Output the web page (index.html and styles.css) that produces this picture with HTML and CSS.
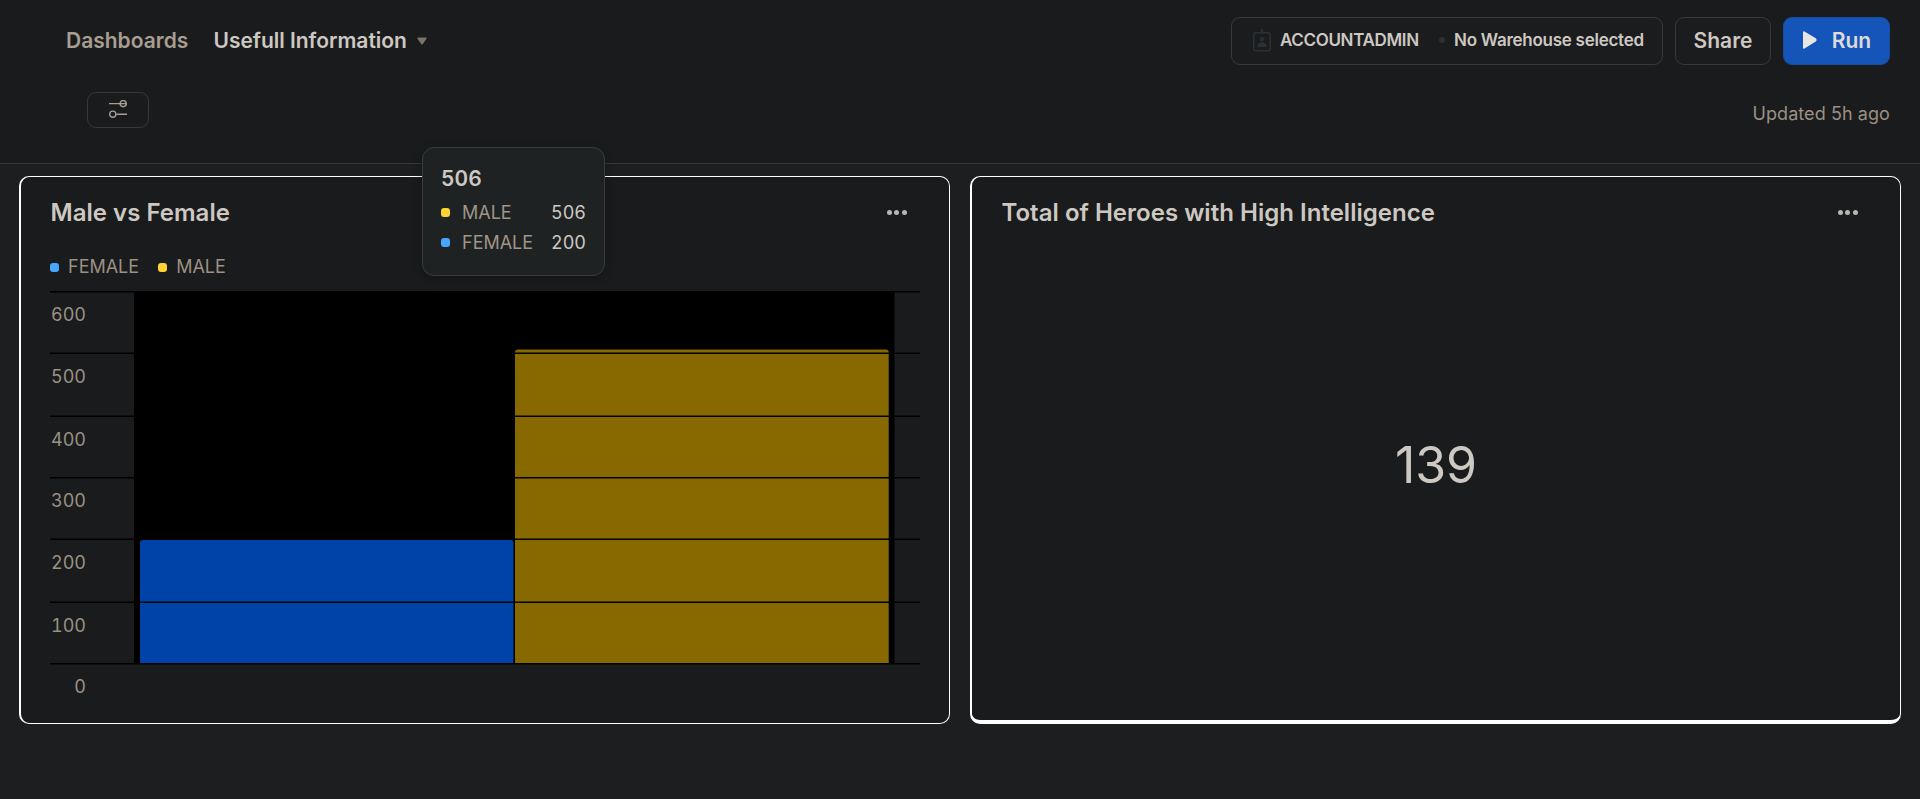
FILE: index.html
```html
<!DOCTYPE html>
<html lang="en">
<head>
<meta charset="utf-8">
<title>Usefull Information</title>
<link rel="stylesheet" href="styles.css">
</head>
<body>
<header class="header">
  <div class="bar">
    <nav class="crumbs">
      <a class="crumb-parent">Dashboards</a>
      <span class="crumb-current">Usefull Information</span>
      <svg class="caret" width="10" height="8" viewBox="0 0 10 8"><path d="M1 .5h8q1 .3.5 1.2L5.8 7q-.8 1-1.6 0L.5 1.700Q0 .8 1 .5z" fill="#7b746b"/></svg>
    </nav>
    <div class="actions">
      <div class="context">
        <svg class="badge" width="18" height="23" viewBox="0 0 18 23"><rect x=".75" y="3.750" width="16.500" height="18" rx="2.500" fill="none" stroke="#2d3033" stroke-width="1.500"/><path d="M8 0h2v4H8zM4.500 18v-1a4.500 3.800 0 0 1 9 0v1z" fill="#2d3033"/><circle cx="9" cy="10" r="2.200" fill="#2d3033"/></svg>
        <span class="role">ACCOUNTADMIN</span>
        <span class="sep"></span>
        <span class="warehouse">No Warehouse selected</span>
      </div>
      <button class="btn share">Share</button>
      <button class="btn run"><svg width="15" height="18" viewBox="0 0 15 18"><path d="M2 1.300 13.200 8a1 1 0 0 1 0 1.600L2 16.700z" fill="#e8e6e3" stroke="#e8e6e3" stroke-width="2" stroke-linejoin="round"/></svg><span>Run</span></button>
    </div>
  </div>
  <div class="subbar">
    <button class="filter"><svg width="18" height="18" viewBox="0 0 18 18" fill="none" stroke="#a89e91" stroke-width="1.400"><path d="M0 3.600h17.500M7.500 14.200H18"/><circle cx="14.200" cy="3.600" r="3.100"/><circle cx="3.800" cy="14.200" r="3.100"/></svg></button>
    <span class="updated">Updated 5h ago</span>
  </div>
</header>
<main class="tiles">
  <section class="tile">
    <div class="tile-head"><h2>Male vs Female</h2><span class="more"><i></i><i></i><i></i></span></div>
    <div class="legend">
      <span class="key"><i class="dot female"></i>FEMALE</span>
      <span class="key"><i class="dot male"></i>MALE</span>
    </div>
    <svg class="chart" width="870" height="420" viewBox="50 291 870 420">
      <rect x="134" y="291" width="760.500" height="373"/>
      <path d="M140 663.500V543q0-3 3-3h367.500q3 0 3 3v120.500z" fill="#0043a8"/>
      <path d="M515 663.500V352.500q0-3 3-3h367.700q3 0 3 3v311z" fill="#886900"/>
      <g class="grid">
        <rect x="50" y="291" width="870" height="1.500"/>
        <rect x="50" y="352.500" width="870" height="1.500"/>
        <rect x="50" y="415.500" width="870" height="1.500"/>
        <rect x="50" y="477" width="870" height="1.500"/>
        <rect x="50" y="538.500" width="870" height="1.500"/>
        <rect x="50" y="601.500" width="870" height="1.500"/>
        <rect x="50" y="663" width="870" height="1.500"/>
      </g>
      <g class="ticks">
        <text x="86" y="321">600</text>
        <text x="86" y="383">500</text>
        <text x="86" y="446">400</text>
        <text x="86" y="507">300</text>
        <text x="86" y="569">200</text>
        <text x="86" y="632">100</text>
        <text x="86" y="693">0</text>
      </g>
    </svg>
  </section>
  <section class="tile score">
    <div class="tile-head"><h2>Total of Heroes with High Intelligence</h2><span class="more"><i></i><i></i><i></i></span></div>
    <div class="value">139</div>
  </section>
</main>
<aside class="tooltip">
  <strong>506</strong>
  <div class="tip-row"><i class="dot male"></i><span>MALE</span><b>506</b></div>
  <div class="tip-row"><i class="dot female"></i><span>FEMALE</span><b>200</b></div>
</aside>
</body>
</html>
```
FILE: styles.css
```css
* { box-sizing: border-box; }
body {
  margin: 0;
  height: 799px;
  overflow: hidden;
  background: #1d1e20;
  color: #cdc8c1;
  font-family: Inter, "Liberation Sans", sans-serif;
}
.header {
  height: 164px;
  background: #1a1b1d;
  border-bottom: 1px solid #36393b;
  padding: 17px 30px 0 66px;
}
.bar, .subbar { display: flex; justify-content: space-between; }
.crumbs { display: flex; align-items: center; height: 47px; font-size: 21px; font-weight: 600; }
.crumb-parent { width: 147.500px; color: #a89e91; }
.crumb-current { width: 203.500px; letter-spacing: -.03px; }
.actions { display: flex; gap: 12px; }
.context, .btn {
  height: 48px;
  border: 1px solid #36393b;
  border-radius: 9px;
  background: #1b1c1e;
}
.context { width: 432px; display: flex; align-items: center; padding: 0 0 2px 21px; font-size: 17px; font-weight: 600; white-space: nowrap; }
.badge { margin-right: 9px; }
.role { width: 159px; letter-spacing: -.35px; }
.sep { width: 6px; height: 6px; border-radius: 50%; background: #2d3134; margin-right: 9px; }
.warehouse { letter-spacing: -.26px; }
.btn { padding: 0 0 2px; font: 600 21px Inter, sans-serif; color: #cdc8c1; }
.share { width: 96px; }
.run { width: 107px; display: flex; align-items: center; justify-content: center; gap: 15px; background: #1555ba; border-color: #164d9f; color: #dedbd7; }
.subbar { padding: 27px 0 0 21px; }
.filter { width: 62px; height: 36px; padding: 0 0 2px; border: 1px solid #36393b; border-radius: 9px; background: #1a1b1d; display: flex; align-items: center; justify-content: center; }
.updated { color: #9a9083; font-size: 18px; line-height: 22px; padding-top: 11px; letter-spacing: .08px; }
.tiles { display: grid; grid-template-columns: 931px 931px; gap: 20px; padding: 12px 0 0 19px; }
.tile {
  height: 548px;
  border: solid #fff;
  border-width: 1px 1px 1px 2px;
  border-radius: 10px;
  background: #1a1b1d;
  padding: 0 29px;
  overflow: hidden;
}
.score { border-bottom-width: 4px; display: flex; flex-direction: column; }
.tile-head { height: 71px; display: flex; justify-content: space-between; align-items: center; }
h2 { margin: 0; padding-left: .5px; font-size: 24px; font-weight: 600; line-height: 30px; letter-spacing: .02px; }
.more { display: flex; gap: 2.600px; margin: 0 13px 1px 0; }
.more i { width: 5px; height: 5px; border-radius: 50%; background: #b9b6b2; }
.legend { display: flex; gap: 19px; height: 43px; align-items: flex-start; padding-top: 8px; font-size: 18px; line-height: 22px; color: #9a9083; }
.key { display: flex; align-items: center; gap: 9px; }
.dot { width: 9px; height: 9px; border-radius: 3px; flex: none; }
.female { background: #48a6ff; }
.male { background: #ffd337; }
.chart { display: block; }
.ticks { font-size: 18px; fill: #9a9083; text-anchor: end; font-variant-numeric: tabular-nums; }
.value { text-align: center; font-size: 50px; line-height: 60px; padding-top: 187px; }
.tooltip {
  position: absolute;
  left: 422px;
  top: 147px;
  width: 183px;
  height: 129px;
  border: 1px solid #383c3e;
  border-radius: 12px;
  background: #1f2223;
  box-shadow: 0 3px 10px rgba(0, 0, 0, .25);
  padding: 18px 18px 0;
  font-size: 18px;
}
.tooltip strong { display: block; font-size: 21px; font-weight: 600; line-height: 26px; margin-bottom: 5px; font-variant-numeric: tabular-nums; }
.tip-row { display: flex; align-items: center; height: 30px; }
.tip-row span { margin-left: 12px; color: #9f9588; }
.tip-row b { margin-left: auto; font-weight: 400; font-variant-numeric: tabular-nums; }
```
